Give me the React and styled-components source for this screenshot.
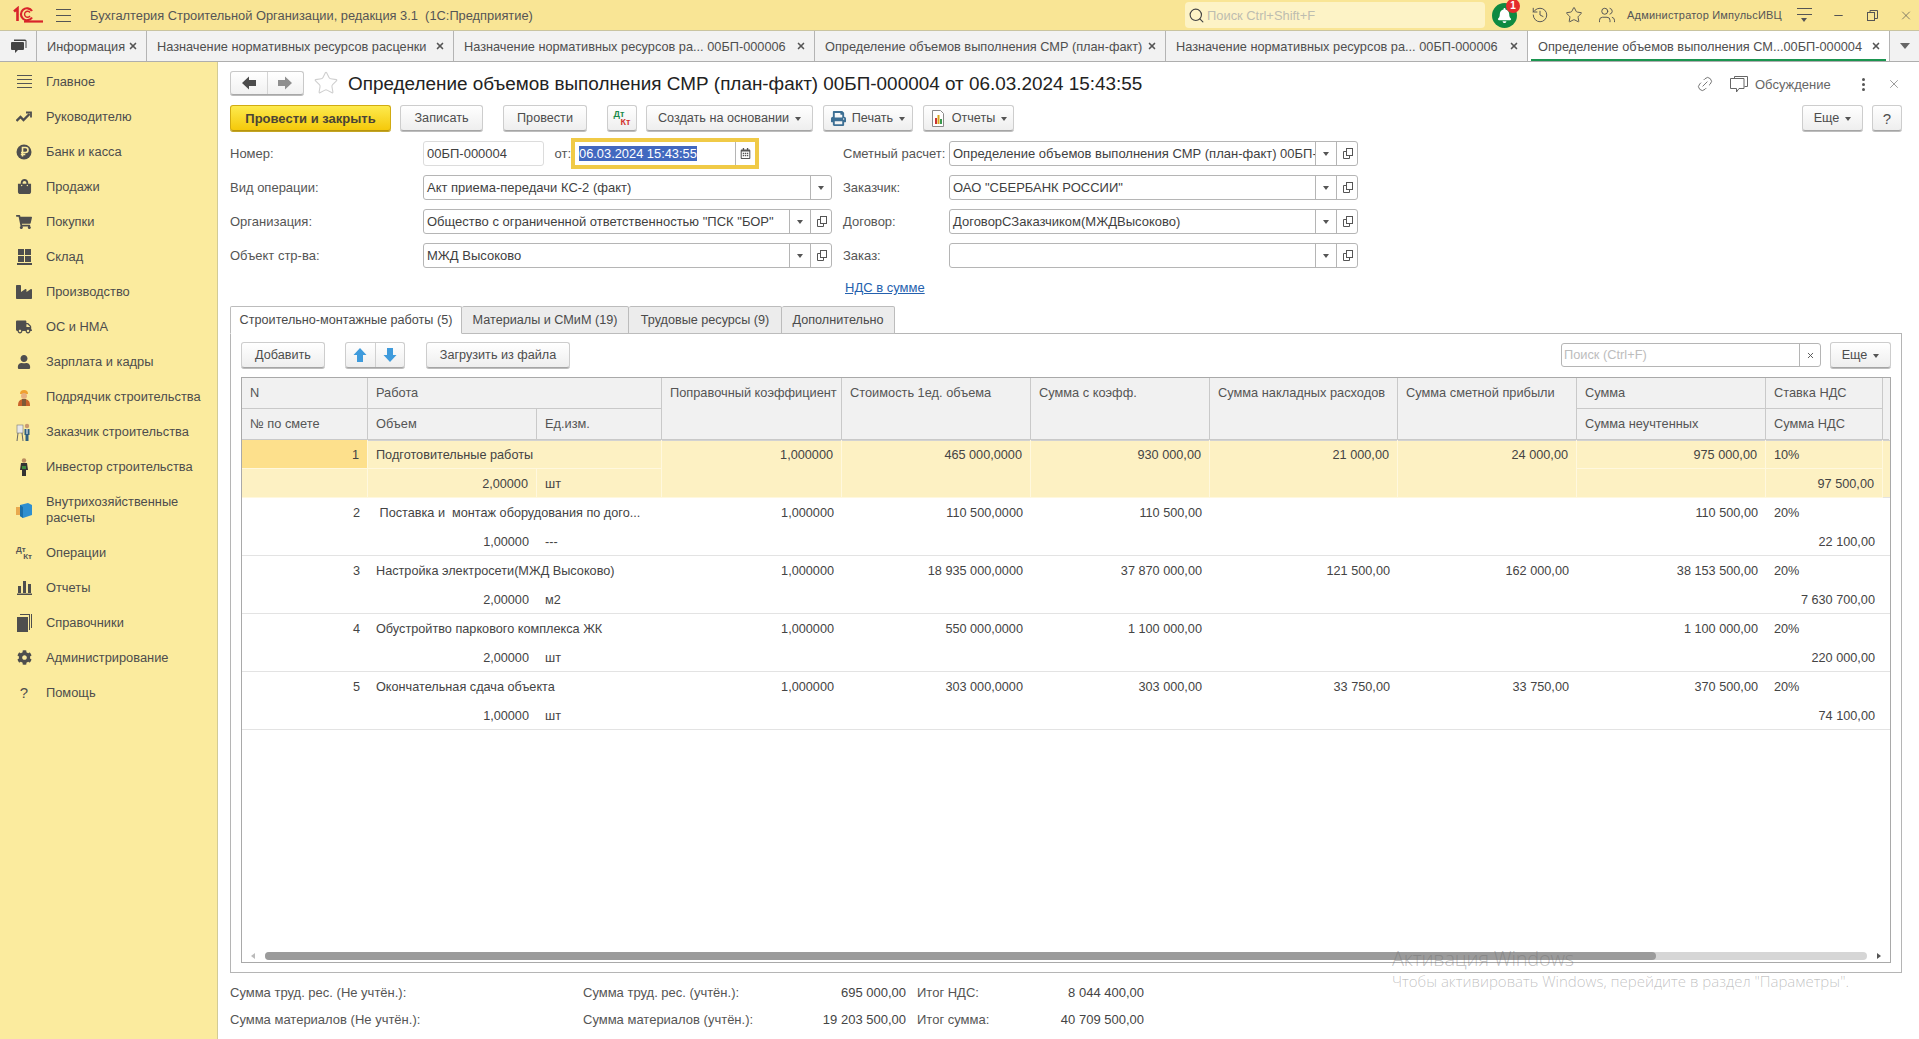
import React from 'react';
import styled, { createGlobalStyle } from 'styled-components';
import { FaShoppingBag, FaShoppingCart, FaTruck, FaUser, FaIndustry, FaCog, FaPrint, FaBell, FaRegCalendarAlt } from 'react-icons/fa';
import { History, Star, Users, Link2, Search, X, Minus } from 'lucide-react';

const Global = createGlobalStyle`
  html, body { margin: 0; padding: 0; width: 1919px; height: 1039px; overflow: hidden; background: #fff; }
  * { box-sizing: border-box; }
  body { font-family: "Liberation Sans", Arial, sans-serif; font-size: 13px; color: #4a4a4a; }
`;
const Page = styled.div`position: relative; width: 1919px; height: 1039px; display: flex; flex-direction: column; overflow: hidden;`;

/* ---------- top bar ---------- */
const TopBar = styled.header`height: 30px; flex: none; display: flex; align-items: center; background: #f9e595; position: relative;`;
const Logo = styled.svg`margin-left: 13px; width: 30px; height: 18px; flex: none;`;
const Burger = styled.div`margin-left: 13px; width: 15px; height: 13px; border-top: 1px solid #555; border-bottom: 1px solid #555; position: relative; flex: none;
  &::after { content: ''; position: absolute; left: 0; right: 0; top: 5px; height: 1px; background: #555; }`;
const AppTitle = styled.div`margin-left: 19px; width: 443px; white-space: pre; font-size: 12.85px; color: #555;`;
const GlobalSearch = styled.div`margin-left: 652px; width: 300px; height: 26px; background: #fdf3c6; border-radius: 4px; display: flex; align-items: center; padding-left: 3px; gap: 2px; color: #bdbdb0; font-size: 12.9px; flex: none;
  svg { color: #444; }`;
const BellWrap = styled.div`position: relative; margin-left: 7px; width: 25px; height: 25px; border-radius: 50%; background: #0f8a41; color: #fff; display: flex; align-items: center; justify-content: center; flex: none;`;
const Badge = styled.span`position: absolute; right: -3px; top: -4px; width: 14px; height: 14px; border-radius: 50%; background: #e42c2c; color: #fff; font-size: 10px; font-weight: 700; text-align: center; line-height: 14px;`;
const BarIcon = styled.span`display: flex; width: ${p => p.$w}px; justify-content: center; color: #555; flex: none; margin-left: ${p => p.$ml || 0}px;`;
const UserName = styled.div`margin-left: 11px; width: 157px; font-size: 11px; letter-spacing: .2px; color: #555; white-space: nowrap; flex: none;`;
const Filter = styled.div`width: 15px; height: 14px; margin-left: 13px; flex: none; position: relative; border-top: 1px solid #555;
  &::before { content: ''; position: absolute; left: 0; right: 0; top: 5px; height: 1px; background: #555; }
  &::after { content: ''; position: absolute; left: 4px; top: 9px; border: 3.5px solid transparent; border-top: 4px solid #555; }`;

/* ---------- open-window tabs ---------- */
const TabBar = styled.nav`height: 32px; flex: none; display: flex; background: #f2f2f2; border-top: 1px solid #c9c4a0; border-bottom: 1px solid #aeaeae;`;
const ChatCell = styled.div`width: 37px; flex: none; display: flex; align-items: center; justify-content: center; border-right: 1px solid #b4b4b4; color: #444;`;
const WinTab = styled.div`position: relative; flex: none; width: ${p => p.$w}px; display: flex; align-items: center; justify-content: space-between; padding: 0 8px 0 10px; border-right: 1px solid #b4b4b4; background: ${p => p.$active ? '#fff' : 'transparent'}; white-space: nowrap; color: #4f4f4f; font-size: 12.75px; overflow: hidden;
  ${p => p.$active && `&::after { content: ''; position: absolute; left: 3px; right: 3px; bottom: 0; height: 2.5px; background: #1b9550; }`}`;
const CloseMark = styled(X)`flex: none; color: #555; stroke-width: 4;`;
const TabMore = styled.div`flex: 1; display: flex; align-items: center; justify-content: center;
  &::after { content: ''; margin-top: 4px; border: 5px solid transparent; border-top: 6px solid #666; }`;

/* ---------- section panel ---------- */
const Body = styled.div`flex: 1; display: flex; min-height: 0;`;
const Sidebar = styled.aside`width: 218px; flex: none; background: #fbeb9e; border-right: 1px solid #d3cb94; padding-top: 2px;`;
const SideItem = styled.div`display: flex; align-items: center; min-height: 35px; padding-left: 16px; font-size: 12.85px; line-height: 16px; color: #4d4d4d; ${p => p.$tall && 'min-height: 51px;'}`;
const SideIcon = styled.span`width: 16px; height: 18px; margin-right: 14px; flex: none; display: flex; align-items: center; justify-content: center; color: #4e4e4e;`;
const MiniDk = styled.span`display: block; font-size: 8px; line-height: 7px; font-weight: 700; color: #555; width: 16px;
  span { display: block; } span + span { text-align: right; }`;

/* ---------- document ---------- */
const Content = styled.main`flex: 1; min-width: 0; display: flex; flex-direction: column; padding: 9px 17px 0 12px;`;
const HeaderRow = styled.div`height: 24px; display: flex; align-items: center; flex: none;`;
const NavGroup = styled.div`display: flex; width: 74px; height: 24px; border: 1px solid #c9c9c9; border-bottom-color: #a8a8a8; border-radius: 3px; background: linear-gradient(#fff, #f1f1f1); box-shadow: 0 1px 0 #bbb; flex: none;`;
const NavBtn = styled.div`flex: 1; display: flex; align-items: center; justify-content: center; & + & { border-left: 1px solid #d5d5d5; }`;
const FavStar = styled(Star)`margin-left: 9px; color: #cfcfcf; flex: none; stroke-width: 1;`;
const DocTitle = styled.h1`margin: 1px 0 0 9px; font-size: 18.9px; font-weight: 400; color: #222; white-space: nowrap;`;
const HeaderTools = styled.div`margin-left: auto; display: flex; align-items: center; color: #666; padding-top: 2px; font-size: 13px;`;
const HeaderText = styled.span`margin-left: 7px; width: 75px; white-space: nowrap;`;
const Dots = styled.span`margin-left: 32px; display: flex; flex-direction: column; gap: 2px; i { display: block; width: 3px; height: 3px; background: #555; border-radius: 50%; }`;

const CommandBar = styled.div`margin-top: 10px; height: 26px; display: flex; flex: none; align-items: stretch;`;
const Btn = styled.div`width: ${p => p.$w}px; margin-left: ${p => p.$ml || 0}px; flex: none; display: flex; align-items: center; justify-content: center; gap: 6px; border: 1px solid #cdcdcd; border-bottom-color: #a5a5a5; border-radius: 3px; background: linear-gradient(#fff, #eeeeee); box-shadow: 0 1px 0 #bdbdbd; color: #4d4d4d; font-size: 12.65px; white-space: nowrap;`;
const PrimaryBtn = styled(Btn)`background: linear-gradient(#fdea4e, #f5c90a); border-color: #d1ab12; border-bottom-color: #b8950e; font-weight: 700; font-size: 13px; color: #4a4336; box-shadow: 0 1px 0 #c3a524;`;
const Caret = styled.i`width: 0; height: 0; border: 3px solid transparent; border-top: 4px solid #555; margin-top: 4px; flex: none;`;
const DkSmall = styled.span`display: block; width: 17px; font-size: 9px; line-height: 8px; font-weight: 700; span { display: block; color: #1a8a4a; } span + span { color: #d2322d; text-align: right; }`;
const Spacer = styled.div`flex: 1;`;

const FormGrid = styled.section`margin: 10px 0 9px; display: grid; grid-template-columns: 602px 515.4px; column-gap: 11px; row-gap: 9px; flex: none; height: 156px; grid-template-rows: 25px 25px 25px 25px 20px;`;
const FormRow = styled.div`display: flex; align-items: center;`;
const Label = styled.label`width: ${p => p.$w}px; flex: none; color: #555; font-size: 13px; white-space: nowrap;`;
const Field = styled.div`flex: ${p => p.$w ? 'none' : 1}; width: ${p => p.$w ? p.$w + 'px' : 'auto'}; min-width: 0; height: 25px; display: flex; background: #fff; border: 1px solid ${p => p.$soft ? '#dcdcdc' : '#b5b5b5'}; border-radius: 3px; color: #3f3f3f;`;
const FieldText = styled.div`flex: 1; min-width: 0; overflow: hidden; white-space: nowrap; padding-left: 3px; line-height: 23px; font-size: 13px;`;
const FieldBtn = styled.div`width: ${p => p.$w || 21}px; flex: none; border-left: 1px solid #b5b5b5; display: flex; align-items: center; justify-content: center; color: #555;`;
const FromLabel = styled.span`margin-left: 10.5px; width: 19.5px; flex: none; color: #555;`;
const DateField = styled(Field)`flex: none; width: 182px; border-radius: 0; margin-left: 0; outline: 3px solid #f0ca47; outline-offset: 0; border-color: #f0ca47;`;
const Selected = styled.span`background: #4268bf; color: #fff; display: inline-block; line-height: 15px; margin-left: 1px; padding: 0; font-size: 12.85px;`;
const LinkRow = styled.div`grid-column: 2; padding-left: 2px; padding-top: 1px; line-height: 20px; color: #2561ae; text-decoration: underline; font-size: 13px;`;

/* ---------- inner tabs ---------- */
const InnerTabs = styled.div`height: 28px; display: flex; flex: none; margin-bottom: -1px; position: relative; z-index: 1;`;
const InnerTab = styled.div`width: ${p => p.$w}px; flex: none; display: flex; align-items: center; justify-content: center; border: 1px solid #bcbcbc; border-left-width: ${p => p.$first ? '1px' : 0}; border-radius: 2px 2px 0 0; background: ${p => p.$active ? '#fff' : '#ececec'}; border-bottom-color: ${p => p.$active ? '#fff' : '#bcbcbc'}; white-space: nowrap; color: #4a4a4a; font-size: 12.65px;`;
const Panel = styled.section`flex: 1; min-height: 0; border: 1px solid #b5b5b5; padding: 8px 10px 9px 10px; display: flex; flex-direction: column;`;
const InnerBar = styled.div`height: 26px; display: flex; align-items: stretch; flex: none;`;
const ArrowGroup = styled(Btn)`padding: 0; gap: 0; align-items: stretch;`;
const ArrowBtn = styled.div`flex: 1; display: flex; align-items: center; justify-content: center; & + & { border-left: 1px solid #d0d0d0; }`;
const TableSearch = styled(Field)`flex: none; margin-top: 1px; height: 24px; width: 260px;`;
const Placeholder = styled.div`flex: 1; padding-left: 2px; line-height: 22px; color: #bdbdbd; font-size: 12.8px;`;

/* ---------- table ---------- */
const COLS = '126px 169px 125px 180px 189px 179px 188px 179px 189px 117px 6px';
const Table = styled.div`margin-top: 9px; flex: 1; min-height: 0; border: 1px solid #a9a9a9; display: flex; flex-direction: column;`;
const HeadGrid = styled.div`display: grid; grid-template-columns: ${COLS}; grid-template-rows: 31px 31px; flex: none; background: #f1f1f1;`;
const HeadCell = styled.div`grid-column: span ${p => p.$cols || 1}; grid-row: span ${p => p.$rows || 1}; padding: 7px 7px 0 8px; border-right: 1px solid #c9c9c9; border-bottom: 1px solid #c9c9c9; white-space: nowrap; overflow: hidden; color: #555; font-size: 12.8px;`;
const HeadFill = styled.div`grid-row: span 2; border-bottom: 1px solid #c9c9c9;`;
const RowGrid = styled.div`display: grid; grid-template-columns: ${COLS}; grid-template-rows: 29px 29px; flex: none; border-bottom: 1px solid #e3e3e3; height: 58px; background: ${p => p.$sel ? '#fdf1c3' : '#fff'};
  ${p => p.$sel && 'box-shadow: inset 0 1px 0 #d2d2d2;'}`;
const Cell = styled.div`grid-column: span ${p => p.$cols || 1}; grid-row: span ${p => p.$rows || 1}; padding: 8px 8px 0 8px; text-align: ${p => p.$right ? 'right' : 'left'}; white-space: pre; overflow: hidden; color: #444; font-size: 12.7px;
  background: ${p => p.$cur ? '#fde08c' : 'transparent'};
  ${p => p.$sel && 'border-right: 1px solid #fff8de; border-bottom: 1px solid #fff8de;'}`;
const TableFill = styled.div`flex: 1; min-height: 0;`;
const ScrollRow = styled.div`height: 8px; margin-bottom: 2px; flex: none; display: flex; align-items: center;`;
const ScrollArrow = styled.div`width: 23px; flex: none; display: flex; justify-content: center;
  &::after { content: ''; border: 3px solid transparent; ${p => p.$left ? 'border-right: 4px solid #bbb; margin-right: 4px;' : 'border-left: 4px solid #555; margin-left: 4px;'} }`;
const ScrollTrack = styled.div`flex: 1; height: 8px; border-radius: 4px; background: #d6d6d6;`;
const ScrollThumb = styled.div`height: 8px; border-radius: 4px; background: #9b9b9b;`;

/* ---------- totals ---------- */
const Totals = styled.footer`height: 66px; flex: none; padding-top: 12px; display: grid; grid-template-columns: 353px 323px 238px; grid-auto-rows: 16px; row-gap: 11px; font-size: 13px; color: #555; line-height: 16px;`;
const TotalPair = styled.div`display: flex; justify-content: space-between; white-space: nowrap; margin-left: ${p => p.$ml || 0}px;`;
const TotalValue = styled.span`color: #444;`;
const Watermark = styled.div`position: absolute; left: 1392px; top: 945px; color: rgba(110,110,110,.42); font-family: "Open Sans", sans-serif; font-weight: 300; pointer-events: none; white-space: nowrap;`;
const WmTitle = styled.div`font-size: 20px; line-height: 27px; letter-spacing: -.2px;`;
const WmText = styled.div`font-size: 15px; line-height: 20px; margin-top: -1px;`;

const Drop = () => <svg width="6" height="4" viewBox="0 0 6 4"><path d="M0 0h6L3 4z" fill="#555" /></svg>;
const Open = () => (
  <svg width="11" height="12" viewBox="0 0 11 12" fill="none" stroke="#555"><rect x="4.5" y="0.5" width="6" height="7" /><path d="M4.5 3.5h-3v7h6v-3" /></svg>
);
const BlockArrow = ({ rot = 0, color = '#3f9bdc', size = 14 }) => (
  <svg width={size} height={size} viewBox="0 0 14 14" style={{ transform: `rotate(${rot}deg)` }}><path d="M7 0l6.5 7H10v7H4V7H.5z" fill={color} /></svg>
);
const Bubble = () => (
  <svg width="18" height="18" viewBox="0 0 18 18" fill="none" stroke="#666"><path d="M4.5 3.5V1.5h13v10h-3" /><path d="M.5 3.5h13.5v10H9l-2.5 3.5v-3.5h-6z" fill="#fff" /></svg>
);

const I = {
  main: <svg width="15" height="15" viewBox="0 0 15 15" stroke="#555"><path d="M0 1.5h15M0 5.5h15M0 9.5h15M0 13.5h15" /></svg>,
  trend: <svg width="16" height="12" viewBox="0 0 16 12" fill="none" stroke="#4e4e4e" strokeWidth="2.4"><path d="M0.5 10l4-4 3 3 6-6" /><path d="M10 1.5h5v5" strokeWidth="1.8" /></svg>,
  bank: <svg width="16" height="16" viewBox="0 0 16 16"><circle cx="8" cy="8" r="7.5" fill="#4e4e4e" /><path d="M6.5 12.5V3.5h3a2.4 2.4 0 010 5h-4.5M4.8 10.5h4.5" fill="none" stroke="#fbeb9e" strokeWidth="1.6" /></svg>,
  grid: <svg width="15" height="16" viewBox="0 0 15 16" fill="#4e4e4e"><rect x="1" width="6" height="6" /><rect x="8" width="6" height="6" /><rect x="1" y="7" width="6" height="6" /><rect x="8" y="7" width="6" height="6" /><rect y="14" width="15" height="2" /></svg>,
  worker: <svg width="16" height="18" viewBox="0 0 16 18"><path d="M4 6a4 4 0 018 0z" fill="#f0a030" /><circle cx="8" cy="8" r="3" fill="#e8b080" /><path d="M2 18c0-5 2-7 6-7s6 2 6 7z" fill="#c9622a" /><path d="M6 11h4v7H6z" fill="#7d5a38" /></svg>,
  client: <svg width="16" height="18" viewBox="0 0 16 18"><rect x="1" y="2" width="6" height="8" fill="#e8e8e8" stroke="#777" strokeWidth=".6" /><path d="M2 10l-1 8M6 10l1 8" stroke="#666" /><circle cx="11" cy="3" r="2.2" fill="#c99a70" /><path d="M8.5 6h5v6h-1v6h-3v-6h-1z" fill="#2f5f80" /><path d="M10.5 6h1v5h-1z" fill="#fff" /></svg>,
  investor: <svg width="10" height="18" viewBox="0 0 10 18"><circle cx="5" cy="2.5" r="2.2" fill="#b98b5f" /><path d="M2 5h6l1 7H7v6H3v-6H1z" fill="#333" /><rect x="3" y="8" width="4" height="3" fill="#3d8a3d" /></svg>,
  cube: <svg width="16" height="16" viewBox="0 0 16 16"><path d="M4 3l8-2 4 2v10l-9 3-3-2z" fill="#2f8fd0" /><path d="M4 3l3 2v11l-3-2z" fill="#1c6fa8" /><path d="M0 5h4v8H0z" fill="#e9a94f" /></svg>,
  bars: <svg width="15" height="14" viewBox="0 0 15 14" fill="#4e4e4e"><rect x="1" y="5" width="3" height="7" /><rect x="6" y="0" width="3" height="12" /><rect x="11" y="3" width="3" height="9" /><rect y="12.5" width="15" height="1.5" /></svg>,
  books: <svg width="15" height="18" viewBox="0 0 15 18" fill="#4e4e4e"><rect y="3" width="11" height="15" /><path d="M12 16V1H3V0h10v16zM14 14V0h1v14z" /></svg>,
  report: <svg width="16" height="17" viewBox="0 0 16 17"><path d="M2.5.5h8l3 3v13h-11z" fill="#fff" stroke="#8a8a8a" /><rect x="5" y="8" width="2" height="6" fill="#cc3333" /><rect x="7.5" y="5" width="2" height="9" fill="#d9a520" /><rect x="10" y="9" width="2" height="5" fill="#3b9a4d" /></svg>,
};

const sections = [
  ['Главное', I.main], ['Руководителю', I.trend], ['Банк и касса', I.bank], ['Продажи', <FaShoppingBag size={15} />],
  ['Покупки', <FaShoppingCart size={16} />], ['Склад', I.grid], ['Производство', <FaIndustry size={16} />], ['ОС и НМА', <FaTruck size={16} />],
  ['Зарплата и кадры', <FaUser size={14} />], ['Подрядчик строительства', I.worker], ['Заказчик строительства', I.client], ['Инвестор строительства', I.investor],
];
const sections2 = [
  ['Отчеты', I.bars], ['Справочники', I.books], ['Администрирование', <FaCog size={15} />], ['Помощь', <b style={{ fontWeight: 400, fontSize: 15 }}>?</b>],
];
const winTabs = [
  [110, 'Информация'], [307, 'Назначение нормативных ресурсов расценки'], [361, 'Назначение нормативных ресурсов ра... 00БП-000006'],
  [351, 'Определение объемов выполнения СМР (план-факт)'], [362, 'Назначение нормативных ресурсов ра... 00БП-000006'],
  [362, 'Определение объемов выполнения СМ...00БП-000004', true],
];
const rows = [
  { n: '1', work: 'Подготовительные работы', coef: '1,000000', cost: '465 000,0000', sumK: '930 000,00', over: '21 000,00', prof: '24 000,00', sum: '975 000,00', rate: '10%', vol: '2,00000', unit: 'шт', vat: '97 500,00', sel: true },
  { n: '2', work: ' Поставка и  монтаж оборудования по дого...', coef: '1,000000', cost: '110 500,0000', sumK: '110 500,00', over: '', prof: '', sum: '110 500,00', rate: '20%', vol: '1,00000', unit: '---', vat: '22 100,00' },
  { n: '3', work: 'Настройка электросети(МЖД Высоково)', coef: '1,000000', cost: '18 935 000,0000', sumK: '37 870 000,00', over: '121 500,00', prof: '162 000,00', sum: '38 153 500,00', rate: '20%', vol: '2,00000', unit: 'м2', vat: '7 630 700,00' },
  { n: '4', work: 'Обустройтво паркового комплекса ЖК', coef: '1,000000', cost: '550 000,0000', sumK: '1 100 000,00', over: '', prof: '', sum: '1 100 000,00', rate: '20%', vol: '2,00000', unit: 'шт', vat: '220 000,00' },
  { n: '5', work: 'Окончательная сдача объекта', coef: '1,000000', cost: '303 000,0000', sumK: '303 000,00', over: '33 750,00', prof: '33 750,00', sum: '370 500,00', rate: '20%', vol: '1,00000', unit: 'шт', vat: '74 100,00' },
];

const RefField = ({ text, open = true }) => (
  <Field>
    <FieldText>{text}</FieldText>
    <FieldBtn><Drop /></FieldBtn>
    {open && <FieldBtn><Open /></FieldBtn>}
  </Field>
);

export default function App() {
  return (
    <Page>
      <Global />
      <TopBar>
        <Logo viewBox="0 0 30 18" fill="none" stroke="#d8232a" strokeWidth="2.2">
          <path d="M1 5.5l3.5-3V15" strokeWidth="2.6" />
          <path d="M19 5a6 6 0 100 6.5" />
          <path d="M17 6.5a3 3 0 100 3.5" strokeWidth="1.4" />
          <path d="M11 15.5h19" />
        </Logo>
        <Burger />
        <AppTitle>Бухгалтерия Строительной Организации, редакция 3.1  (1С:Предприятие)</AppTitle>
        <GlobalSearch><Search size={17} strokeWidth={1.6} />Поиск Ctrl+Shift+F</GlobalSearch>
        <BellWrap><FaBell size={15} /><Badge>1</Badge></BellWrap>
        <BarIcon $w={18} $ml={14}><History size={18} strokeWidth={1.3} /></BarIcon>
        <BarIcon $w={18} $ml={16}><Star size={18} strokeWidth={1.3} /></BarIcon>
        <BarIcon $w={18} $ml={15}><Users size={18} strokeWidth={1.3} /></BarIcon>
        <UserName>Администратор ИмпульсИВЦ</UserName>
        <Filter />
        <BarIcon $w={14} $ml={19}><Minus size={13} /></BarIcon>
        <BarIcon $w={14} $ml={20}><svg width="11" height="11" viewBox="0 0 11 11" fill="none" stroke="#555"><rect x=".5" y="2.5" width="7" height="8" /><path d="M3 2.5v-2h7.5v8h-3" /></svg></BarIcon>
        <BarIcon $w={14} $ml={20}><X size={15} strokeWidth={1.2} /></BarIcon>
      </TopBar>

      <TabBar>
        <ChatCell>
          <svg width="17" height="17" viewBox="0 0 17 17" fill="#444"><path d="M3 4h10a1 1 0 011 1v6a1 1 0 01-1 1H8l-3 3v-3H2a1 1 0 01-1-1V5a1 1 0 011-1z" /><path d="M4 1.5h11a1.5 1.5 0 011.5 1.5v7h-1V3H4z" /></svg>
        </ChatCell>
        {winTabs.map(([w, t, a]) => (
          <WinTab key={t + w} $w={w} $active={a}>{t}<CloseMark size={10} /></WinTab>
        ))}
        <TabMore />
      </TabBar>

      <Body>
        <Sidebar>
          {sections.map(([t, ic]) => <SideItem key={t}><SideIcon>{ic}</SideIcon>{t}</SideItem>)}
          <SideItem $tall><SideIcon>{I.cube}</SideIcon><span>Внутрихозяйственные<br />расчеты</span></SideItem>
          <SideItem><SideIcon><MiniDk><span>Дт</span><span>Кт</span></MiniDk></SideIcon>Операции</SideItem>
          {sections2.map(([t, ic]) => <SideItem key={t}><SideIcon>{ic}</SideIcon>{t}</SideItem>)}
        </Sidebar>

        <Content>
          <HeaderRow>
            <NavGroup>
              <NavBtn><BlockArrow rot={-90} color="#4c4c4c" /></NavBtn>
              <NavBtn><BlockArrow rot={90} color="#8f8f8f" /></NavBtn>
            </NavGroup>
            <FavStar size={26} />
            <DocTitle>Определение объемов выполнения СМР (план-факт) 00БП-000004 от 06.03.2024 15:43:55</DocTitle>
            <HeaderTools>
              <Link2 size={18} strokeWidth={1.1} style={{ transform: 'rotate(-45deg)', marginRight: 16 }} />
              <Bubble />
              <HeaderText>Обсуждение</HeaderText>
              <Dots><i /><i /><i /></Dots>
              <X size={14} strokeWidth={1.1} style={{ margin: '0 1px 0 22px' }} />
            </HeaderTools>
          </HeaderRow>

          <CommandBar>
            <PrimaryBtn $w={161}>Провести и закрыть</PrimaryBtn>
            <Btn $w={83} $ml={9}>Записать</Btn>
            <Btn $w={84} $ml={20}>Провести</Btn>
            <Btn $w={30} $ml={20}><DkSmall><span>Дт</span><span>Кт</span></DkSmall></Btn>
            <Btn $w={167} $ml={9}>Создать на основании<Caret /></Btn>
            <Btn $w={90} $ml={10}><FaPrint size={15} color="#3d6f94" />Печать<Caret /></Btn>
            <Btn $w={91} $ml={10}>{I.report}Отчеты<Caret /></Btn>
            <Spacer />
            <Btn $w={61}>Еще<Caret /></Btn>
            <Btn $w={30} $ml={9} style={{ fontSize: 15 }}>?</Btn>
          </CommandBar>

          <FormGrid>
            <FormRow>
              <Label $w={193}>Номер:</Label>
              <Field $w={121} $soft><FieldText>00БП-000004</FieldText></Field>
              <FromLabel>от:</FromLabel>
              <DateField>
                <FieldText><Selected>06.03.2024 15:43:55</Selected></FieldText>
                <FieldBtn $w={20}><FaRegCalendarAlt size={11} /></FieldBtn>
              </DateField>
            </FormRow>
            <FormRow>
              <Label $w={106}>Сметный расчет:</Label>
              <RefField text="Определение объемов выполнения СМР (план-факт) 00БП-000004 от 06.03.2024" />
            </FormRow>
            <FormRow>
              <Label $w={193}>Вид операции:</Label>
              <RefField text="Акт приема-передачи КС-2 (факт)" open={false} />
            </FormRow>
            <FormRow>
              <Label $w={106}>Заказчик:</Label>
              <RefField text='ОАО "СБЕРБАНК РОССИИ"' />
            </FormRow>
            <FormRow>
              <Label $w={193}>Организация:</Label>
              <RefField text='Общество с ограниченной ответственностью "ПСК "БОР"' />
            </FormRow>
            <FormRow>
              <Label $w={106}>Договор:</Label>
              <RefField text="ДоговорСЗаказчиком(МЖДВысоково)" />
            </FormRow>
            <FormRow>
              <Label $w={193}>Объект стр-ва:</Label>
              <RefField text="МЖД Высоково" />
            </FormRow>
            <FormRow>
              <Label $w={106}>Заказ:</Label>
              <RefField text="" />
            </FormRow>
            <LinkRow>НДС в сумме</LinkRow>
          </FormGrid>

          <InnerTabs>
            <InnerTab $w={232} $active $first>Строительно-монтажные работы (5)</InnerTab>
            <InnerTab $w={167}>Материалы и СМиМ (19)</InnerTab>
            <InnerTab $w={153}>Трудовые ресурсы (9)</InnerTab>
            <InnerTab $w={113}>Дополнительно</InnerTab>
          </InnerTabs>

          <Panel>
            <InnerBar>
              <Btn $w={84}>Добавить</Btn>
              <ArrowGroup $w={60} $ml={20}>
                <ArrowBtn><BlockArrow /></ArrowBtn>
                <ArrowBtn><BlockArrow rot={180} /></ArrowBtn>
              </ArrowGroup>
              <Btn $w={144} $ml={21}>Загрузить из файла</Btn>
              <Spacer />
              <TableSearch>
                <Placeholder>Поиск (Ctrl+F)</Placeholder>
                <FieldBtn><X size={9} strokeWidth={2.5} /></FieldBtn>
              </TableSearch>
              <Btn $w={61} $ml={9}>Еще<Caret /></Btn>
            </InnerBar>

            <Table>
              <HeadGrid>
                <HeadCell>N</HeadCell>
                <HeadCell $cols={2}>Работа</HeadCell>
                <HeadCell $rows={2}>Поправочный коэффициент</HeadCell>
                <HeadCell $rows={2}>Стоимость 1ед. объема</HeadCell>
                <HeadCell $rows={2}>Сумма с коэфф.</HeadCell>
                <HeadCell $rows={2}>Сумма накладных расходов</HeadCell>
                <HeadCell $rows={2}>Сумма сметной прибыли</HeadCell>
                <HeadCell>Сумма</HeadCell>
                <HeadCell>Ставка НДС</HeadCell>
                <HeadFill />
                <HeadCell>№ по смете</HeadCell>
                <HeadCell>Объем</HeadCell>
                <HeadCell>Ед.изм.</HeadCell>
                <HeadCell>Сумма неучтенных</HeadCell>
                <HeadCell>Сумма НДС</HeadCell>
              </HeadGrid>
              {rows.map(r => (
                <RowGrid key={r.n} $sel={r.sel}>
                  <Cell $right $cur={r.sel} $sel={r.sel}>{r.n}</Cell>
                  <Cell $cols={2} $sel={r.sel}>{r.work}</Cell>
                  <Cell $rows={2} $right $sel={r.sel}>{r.coef}</Cell>
                  <Cell $rows={2} $right $sel={r.sel}>{r.cost}</Cell>
                  <Cell $rows={2} $right $sel={r.sel}>{r.sumK}</Cell>
                  <Cell $rows={2} $right $sel={r.sel}>{r.over}</Cell>
                  <Cell $rows={2} $right $sel={r.sel}>{r.prof}</Cell>
                  <Cell $right $sel={r.sel}>{r.sum}</Cell>
                  <Cell $sel={r.sel}>{r.rate}</Cell>
                  <Cell $rows={2} />
                  <Cell $sel={r.sel} />
                  <Cell $right $sel={r.sel}>{r.vol}</Cell>
                  <Cell $sel={r.sel}>{r.unit}</Cell>
                  <Cell $sel={r.sel} />
                  <Cell $right $sel={r.sel}>{r.vat}</Cell>
                </RowGrid>
              ))}
              <TableFill />
              <ScrollRow>
                <ScrollArrow $left />
                <ScrollTrack><ScrollThumb style={{ width: `${(1391 / 1602) * 100}%` }} /></ScrollTrack>
                <ScrollArrow />
              </ScrollRow>
            </Table>
          </Panel>

          <Totals>
            <span>Сумма труд. рес. (Не учтён.):</span>
            <TotalPair><span>Сумма труд. рес. (учтён.):</span><TotalValue>695 000,00</TotalValue></TotalPair>
            <TotalPair $ml={11}><span>Итог НДС:</span><TotalValue>8 044 400,00</TotalValue></TotalPair>
            <span>Сумма материалов (Не учтён.):</span>
            <TotalPair><span>Сумма материалов (учтён.):</span><TotalValue>19 203 500,00</TotalValue></TotalPair>
            <TotalPair $ml={11}><span>Итог сумма:</span><TotalValue>40 709 500,00</TotalValue></TotalPair>
          </Totals>
        </Content>
      </Body>

      <Watermark>
        <WmTitle>Активация Windows</WmTitle>
        <WmText>Чтобы активировать Windows, перейдите в раздел "Параметры".</WmText>
      </Watermark>
    </Page>
  );
}
